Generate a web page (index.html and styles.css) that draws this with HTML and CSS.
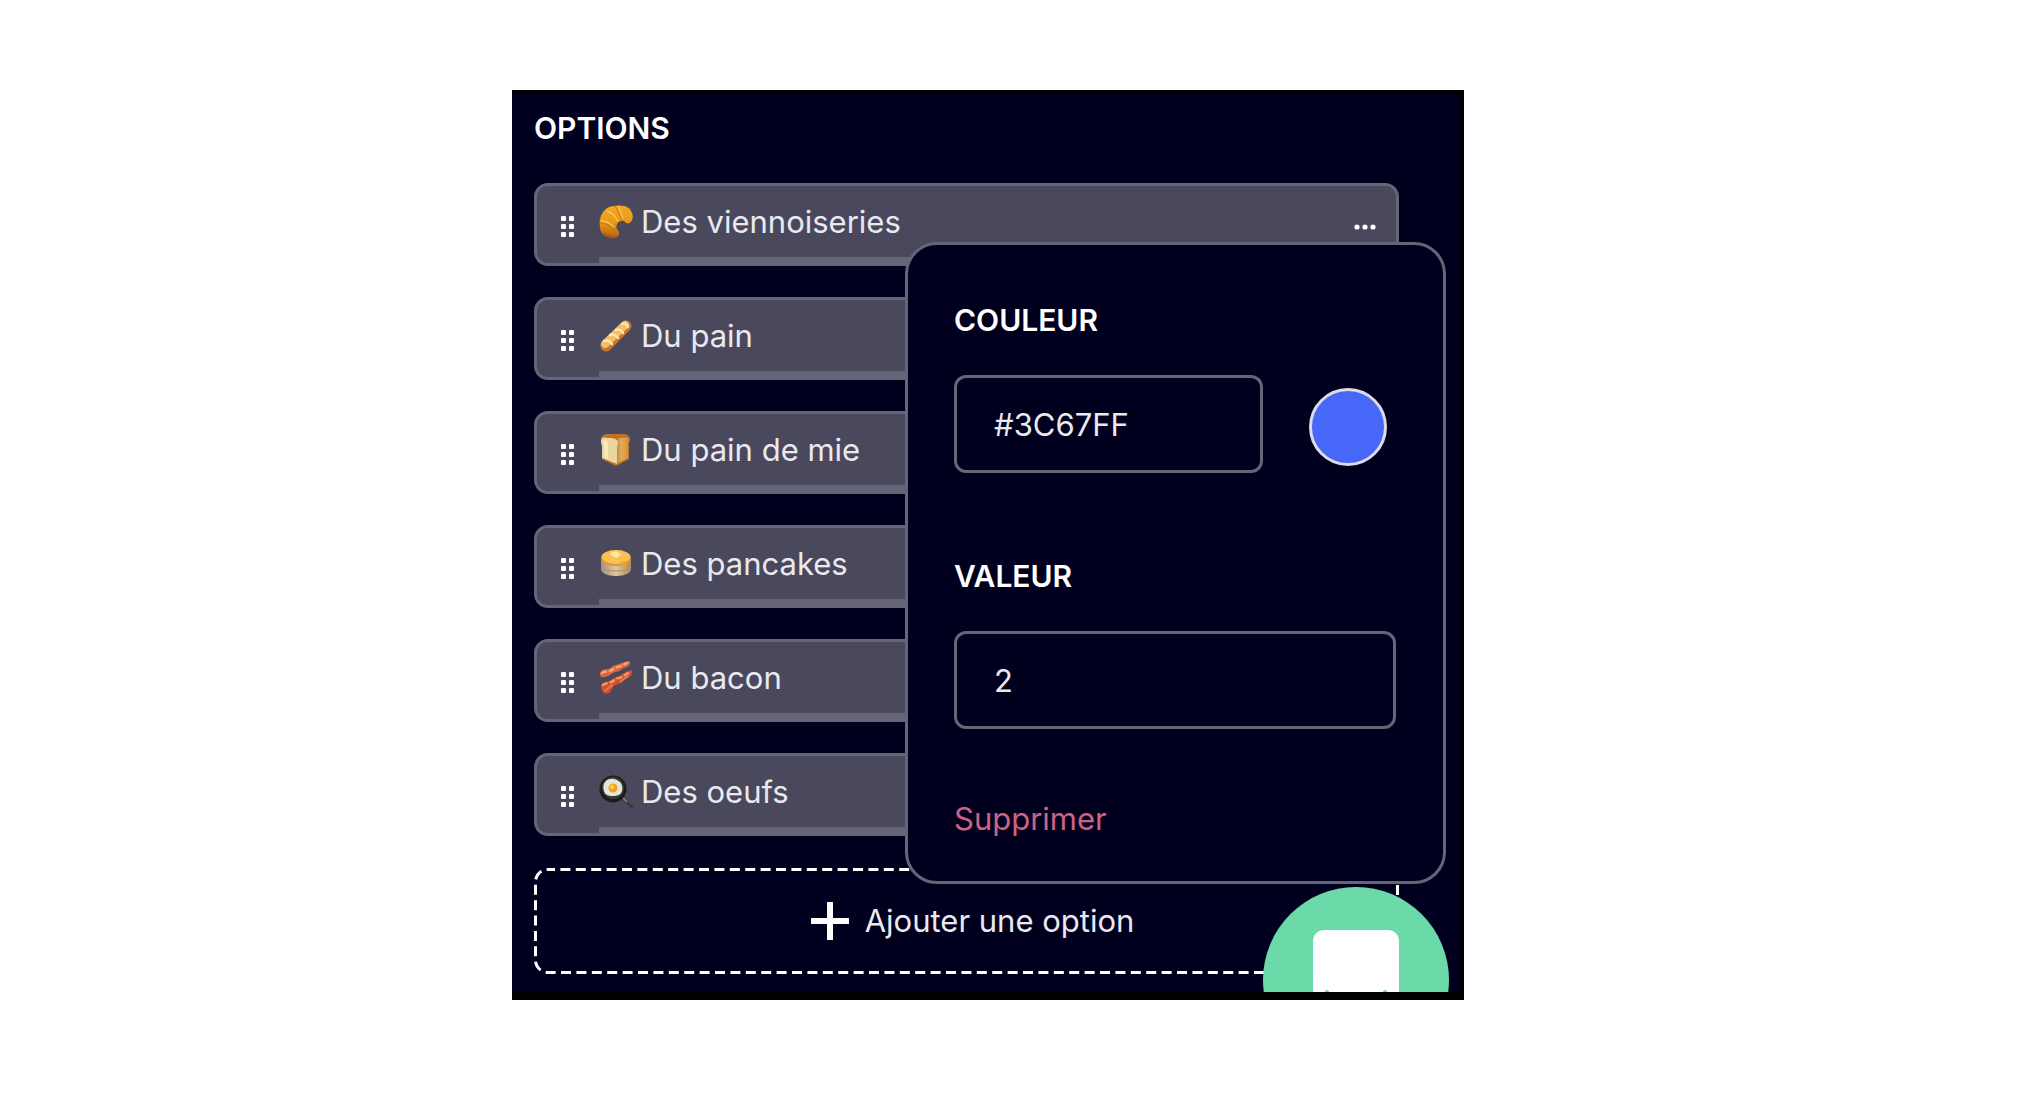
FILE: index.html
```
<!DOCTYPE html>
<html lang="fr">
  <head>
    <meta charset="UTF-8" />
    <meta name="viewport" content="width=device-width, initial-scale=1.0" />
    <title>Options</title>
    <link rel="stylesheet" href="styles.css">
  </head>
  <body>
    <!-- Shared symbols and gradients -->
    <svg class="defs" aria-hidden="true">
      <defs>
        <linearGradient id="crust" x1="0" y1="0" x2="0" y2="1">
          <stop offset="0" stop-color="#f3a827" />
          <stop offset="0.5" stop-color="#ea9a1c" />
          <stop offset="1" stop-color="#b9600f" />
        </linearGradient>
        <linearGradient id="side" x1="0" y1="0" x2="1" y2="0">
          <stop offset="0" stop-color="#b98034" />
          <stop offset="0.4" stop-color="#e2ad55" />
          <stop offset="1" stop-color="#cf8f3a" />
        </linearGradient>
        <linearGradient id="stack" x1="0" y1="0" x2="1" y2="0">
          <stop offset="0" stop-color="#a8927c" />
          <stop offset="0.5" stop-color="#dcc6a0" />
          <stop offset="1" stop-color="#b08a5c" />
        </linearGradient>
        <symbol id="grip" viewBox="0 0 14 22">
          <g fill="#fff">
            <rect x="0" y="0" width="5" height="5" rx="1" />
            <rect x="8" y="0" width="5" height="5" rx="1" />
            <rect x="0" y="8" width="5" height="5" rx="1" />
            <rect x="8" y="8" width="5" height="5" rx="1" />
            <rect x="0" y="16" width="5" height="5" rx="1" />
            <rect x="8" y="16" width="5" height="5" rx="1" />
          </g>
        </symbol>
      </defs>
    </svg>

    <main class="panel">
      <h2>OPTIONS</h2>

      <ul class="options">
        <li class="option">
          <button class="grip" aria-label="Déplacer"><svg><use href="#grip" /></svg></button>
          <div class="field">
            <svg class="emoji" viewBox="0 0 34 34">
              <path d="M1 22C-1 12 5 2 14 1c5-1 12-1 16 2 3 3 5 9 3 12-1 3-4 4-6 3l-2-2c-5-1-9 4-7 8l2 3c1 4-2 6-6 6C7 33 1 29 1 22z" fill="url(#crust)" />
              <path d="M1 18c5 0 10 2 15 7M16 1c3 4 5 9 7 15" fill="none" stroke="#c97a12" stroke-width="1.2" />
              <path d="M2 16c5 0 9 2 13 6M8 6c4 1 8 5 11 10M19 1c2 4 3 8 5 13" fill="none" stroke="#fcc44e" stroke-width="1.4" />
              <path d="M3 26c2 4 6 7 11 7 3 0 5-1 6-3-5 2-11 1-17-4z" fill="#a34f0b" opacity="0.6" />
            </svg>
            <input type="text" value="Des viennoiseries" aria-label="Option 1" />
          </div>
          <button class="more" aria-label="Plus" aria-expanded="true">
            <svg viewBox="0 0 22 6" fill="#fff"><circle cx="3" cy="3" r="2.6" /><circle cx="11" cy="3" r="2.6" /><circle cx="19" cy="3" r="2.6" /></svg>
          </button>

          <!-- Settings of the open option -->
          <form class="popover">
            <label for="color">COULEUR</label>
            <div class="color-row">
              <input type="text" id="color" value="#3C67FF" />
              <button type="button" class="swatch" aria-label="Choisir une couleur"></button>
            </div>
            <label for="value">VALEUR</label>
            <input type="text" id="value" value="2" />
            <button type="button" class="delete">Supprimer</button>
          </form>
        </li>
        <li class="option">
          <button class="grip" aria-label="Déplacer"><svg><use href="#grip" /></svg></button>
          <div class="field">
            <svg class="emoji" viewBox="0 0 34 34">
              <path d="M7 27L27 7" stroke="#c8752b" stroke-width="11" stroke-linecap="round" />
              <path d="M6 25L26 6" stroke="#f3bd69" stroke-width="8" stroke-linecap="round" />
              <path d="M5 22c3-1 6 0 8 3M11 16c3-1 6 0 8 3M17 11c3-1 6 0 7 3M23 5c3-1 5 0 6 3" fill="none" stroke="#ffe6a8" stroke-width="2.4" stroke-linecap="round" />
            </svg>
            <input type="text" value="Du pain" aria-label="Option 2" />
          </div>
        </li>
        <li class="option">
          <button class="grip" aria-label="Déplacer"><svg><use href="#grip" /></svg></button>
          <div class="field">
            <svg class="emoji" viewBox="0 0 34 34">
              <path d="M2 6c0-4 4-5 8-5h13c5 0 8 2 8 5 0 2-1 3-1 5v15l-13 7L3 26V12C2 9 2 8 2 6z" fill="#c27224" />
              <path d="M17 10c0-3 2-5 6-5 4 0 7-1 7 2l-1 3v15l-12 6z" fill="url(#side)" />
              <path d="M2 7c1-3 4-3 7-2 6 0 10 1 10 5l-1 4v17L3 25V13C2 10 2 9 2 7z" fill="#ead6a0" />
              <path d="M4 8c2-1 4 0 5 0v18l-4-2V12z" fill="#f6e9c0" />
            </svg>
            <input type="text" value="Du pain de mie" aria-label="Option 3" />
          </div>
        </li>
        <li class="option">
          <button class="grip" aria-label="Déplacer"><svg><use href="#grip" /></svg></button>
          <div class="field">
            <svg class="emoji" viewBox="0 0 34 34">
              <path d="M2 12v10c0 4 6 7 15 7s15-3 15-7V12z" fill="url(#stack)" />
              <path d="M2 19c3 4 8 5 15 5s12-1 15-5" fill="none" stroke="#b0906a" stroke-width="1" />
              <ellipse cx="17" cy="11" rx="15" ry="8" fill="#e0952b" />
              <ellipse cx="17" cy="10" rx="14" ry="7" fill="#fac253" />
              <path d="M11 6l6-2 5 3-4 4-5-2z" fill="#ffe9a0" />
              <path d="M21 15c3 2 2 5 4 8 2-4 0-6 3-9z" fill="#eba43a" />
            </svg>
            <input type="text" value="Des pancakes" aria-label="Option 4" />
          </div>
        </li>
        <li class="option">
          <button class="grip" aria-label="Déplacer"><svg><use href="#grip" /></svg></button>
          <div class="field">
            <svg class="emoji" viewBox="0 0 34 34">
              <path d="M1 12c2-4 5-4 8-4 3 0 4-4 8-4 4-1 7-3 14-4 1 4-2 6-6 7-3 1-4 4-8 4-3 0-5 3-8 4-4 2-9 2-8-3z" fill="#d9653c" />
              <path d="M2 25c1-4 5-4 8-5 3 0 4-4 8-4 4-1 6-5 15-7 1 5-3 9-7 9-3 1-3 5-7 5-4 1-5 3-7 7-3 4-9 4-10-5z" fill="#cf5029" />
              <path d="M3 12c3-2 6-1 8-2 3-1 5-4 8-4 4-1 6-3 9-4" fill="none" stroke="#f3a37c" stroke-width="2.6" stroke-linecap="round" stroke-dasharray="4 4" />
              <path d="M4 24c3-2 6-2 8-3 3-1 5-4 8-4 4-1 6-4 10-5" fill="none" stroke="#f0936a" stroke-width="2.6" stroke-linecap="round" stroke-dasharray="4 4" />
              <path d="M5 30c4-1 5-5 9-6M21 21l8-6" fill="none" stroke="#e98248" stroke-width="1.6" />
            </svg>
            <input type="text" value="Du bacon" aria-label="Option 5" />
          </div>
        </li>
        <li class="option">
          <button class="grip" aria-label="Déplacer"><svg><use href="#grip" /></svg></button>
          <div class="field">
            <svg class="emoji" viewBox="0 0 34 34">
              <path d="M22 22l11 10" stroke="#3a3636" stroke-width="2.6" stroke-linecap="round" />
              <path d="M23 22l5 5" stroke="#8c8680" stroke-width="1.6" />
              <circle cx="14" cy="14" r="13.5" fill="#1d1d1b" />
              <circle cx="14" cy="13" r="11" fill="#393a36" />
              <path d="M6 7c3-4 8-4 12-2 5 2 6 7 5 11-1 4-5 5-9 5-5 0-8-1-9-5-1-3-1-7 1-9z" fill="#e3e7da" />
              <circle cx="14" cy="13" r="4.6" fill="#f2a31b" />
              <circle cx="13" cy="12" r="2" fill="#ffd25a" />
            </svg>
            <input type="text" value="Des oeufs" aria-label="Option 6" />
          </div>
        </li>
      </ul>

      <button class="add">
        <svg class="dashes"><rect x="1.5" y="1.5" rx="12.5" /></svg>
        <svg class="plus" viewBox="0 0 38 38"><path d="M19 0v38M0 19h38" stroke="#fff" stroke-width="6" /></svg>
        Ajouter une option
      </button>

      <!-- Chat bubble, cut by the bottom of the panel -->
      <div class="chat-clip">
        <button class="chat" aria-label="Chat">
          <svg viewBox="0 0 86 86">
            <rect width="86" height="86" rx="11" fill="#fff" />
            <path d="M14 62c8 14 50 14 58 0" fill="none" stroke="#6bdaa8" stroke-width="4" stroke-linecap="round" />
          </svg>
        </button>
      </div>
    </main>
  </body>
</html>
```
FILE: styles.css
```
* {
  box-sizing: border-box;
}

body {
  margin: 0;
  padding: 90px 576px 90px 512px;
  background: #fff;
  font-family: Inter, sans-serif;
  font-size: 31px;
  line-height: 40px;
  color: #e9e9ee;
}

button,
input {
  font: inherit;
  color: inherit;
  background: none;
  border: none;
  padding: 0;
  margin: 0;
}

button {
  cursor: pointer;
}

svg {
  display: block;
}

.defs {
  position: absolute;
  width: 0;
  height: 0;
}

.panel {
  position: relative;
  padding: 15px 61px 18px 22px;
  background: #00001e;
  border: solid #000;
  border-width: 3px 4px 8px 0;
}

h2,
.popover label {
  margin: 0;
  font-size: 30px;
  font-weight: 600;
  line-height: 40px;
  color: #fff;
}

.options {
  display: flex;
  flex-direction: column;
  gap: 31px;
  margin: 35px 0 32px;
  padding: 0;
  list-style: none;
}

.option {
  position: relative;
  display: flex;
  height: 83px;
  background: #49485d;
  border: 3px solid #666577;
  border-radius: 14px;
}

.grip {
  width: 62px;
  padding: 5px 0 0 24px;
}

.grip svg {
  width: 14px;
  height: 22px;
}

.field {
  flex: 1;
  display: flex;
  align-items: center;
  gap: 8px;
  min-width: 0;
  border-bottom: 6px solid #666577;
}

.field input {
  flex: 1;
  min-width: 0;
}

.emoji {
  width: 34px;
  height: 34px;
}

.more {
  padding: 4px 20px 0 16px;
}

.more svg {
  width: 22px;
  height: 6px;
}

.popover {
  position: absolute;
  z-index: 1;
  top: 56px;
  right: -50px;
  width: 541px;
  padding: 55px 47px 42px 46px;
  background: #00001e;
  border: 3px solid #666577;
  border-radius: 32px;
}

.popover label {
  display: block;
  margin-bottom: 35px;
}

.popover input {
  width: 100%;
  height: 98px;
  margin-bottom: 83px;
  padding: 0 37px;
  border: 3px solid #666577;
  border-radius: 12px;
}

.color-row {
  display: flex;
  align-items: flex-start;
  gap: 46px;
  padding-right: 9px;
}

.color-row input {
  flex: 1;
  min-width: 0;
}

.swatch {
  width: 78px;
  height: 78px;
  margin-top: 13px;
  background: #4767f8;
  border: 3px solid #dcdce6;
  border-radius: 50%;
}

.popover #value {
  margin-bottom: 70px;
}

.delete {
  display: block;
  color: #cf6284;
}

.add {
  position: relative;
  display: flex;
  align-items: center;
  justify-content: center;
  gap: 16px;
  width: 100%;
  height: 106px;
  padding-left: 12px;
}

.dashes {
  position: absolute;
  inset: 0;
  width: 100%;
  height: 100%;
}

.dashes rect {
  width: calc(100% - 3px);
  height: calc(100% - 3px);
  fill: none;
  stroke: #fff;
  stroke-width: 3px;
  stroke-dasharray: 10 5.4;
  stroke-dashoffset: 3px;
}

.plus {
  width: 38px;
  height: 38px;
}

.chat-clip {
  position: absolute;
  right: 11px;
  bottom: 0;
  width: 186px;
  height: 105px;
  overflow: hidden;
}

.chat {
  width: 186px;
  height: 186px;
  padding: 0 0 14px 50px;
  background: #6bdaa8;
  border-radius: 50%;
}

.chat svg {
  width: 86px;
  height: 86px;
}
```
